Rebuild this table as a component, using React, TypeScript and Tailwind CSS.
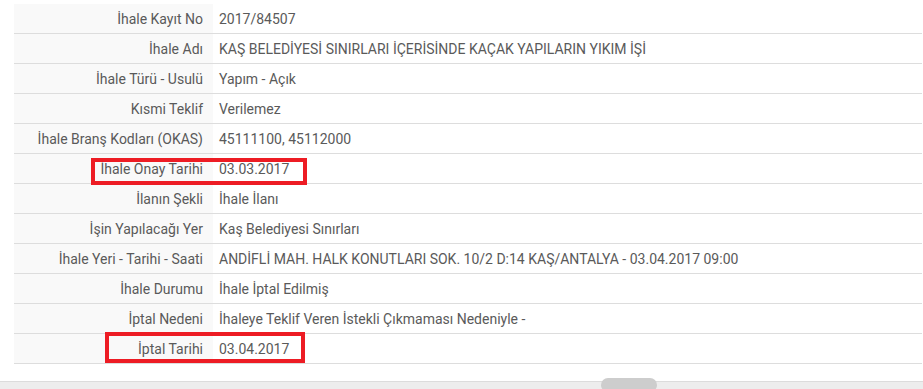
const rows: [string, string][] = [
  ["İhale Kayıt No", "2017/84507"],
  ["İhale Adı", "KAŞ BELEDİYESİ SINIRLARI İÇERİSİNDE KAÇAK YAPILARIN YIKIM İŞİ"],
  ["İhale Türü - Usulü", "Yapım - Açık"],
  ["Kısmi Teklif", "Verilemez"],
  ["İhale Branş Kodları (OKAS)", "45111100, 45112000"],
  ["İhale Onay Tarihi", "03.03.2017"],
  ["İlanın Şekli", "İhale İlanı"],
  ["İşin Yapılacağı Yer", "Kaş Belediyesi Sınırları"],
  ["İhale Yeri - Tarihi - Saati", "ANDİFLİ MAH. HALK KONUTLARI SOK. 10/2 D:14 KAŞ/ANTALYA - 03.04.2017 09:00"],
  ["İhale Durumu", "İhale İptal Edilmiş"],
  ["İptal Nedeni", "İhaleye Teklif Veren İstekli Çıkmaması Nedeniyle -"],
  ["İptal Tarihi", "03.04.2017"],
];

export default function App() {
  return (
    <div className="relative h-[389px] w-[923px] overflow-hidden bg-white font-['Roboto',sans-serif] text-[14px] text-[#5a5a5a]">
      <div className="pl-[14px] pr-[1px] pt-[4px]">
        {rows.map(([label, value]) => (
          <div key={label} className="flex h-[30px] border-b border-[#dddddd]">
            <div className="flex w-[199px] items-center justify-end bg-[#f9f9f9] pr-[10px] pt-[2px]">{label}</div>
            <div className="flex flex-1 items-center pl-[6px] pt-[2px]">{value}</div>
          </div>
        ))}
      </div>

      {/* highlight boxes */}
      <div className="absolute left-[91px] top-[158px] h-[27px] w-[216px] border-4 border-[#ed1c24]" />
      <div className="absolute left-[105px] top-[332px] h-[31px] w-[200px] border-4 border-[#ed1c24]" />

      {/* horizontal scrollbar */}
      <div className="absolute bottom-0 left-0 h-[8px] w-full border-t border-[#dcdcdc] bg-[#ededed]" />
      <div className="absolute left-[601px] top-[378px] h-[14px] w-[56px] rounded-[8px] bg-[#cdcdcd]" />
    </div>
  );
}
